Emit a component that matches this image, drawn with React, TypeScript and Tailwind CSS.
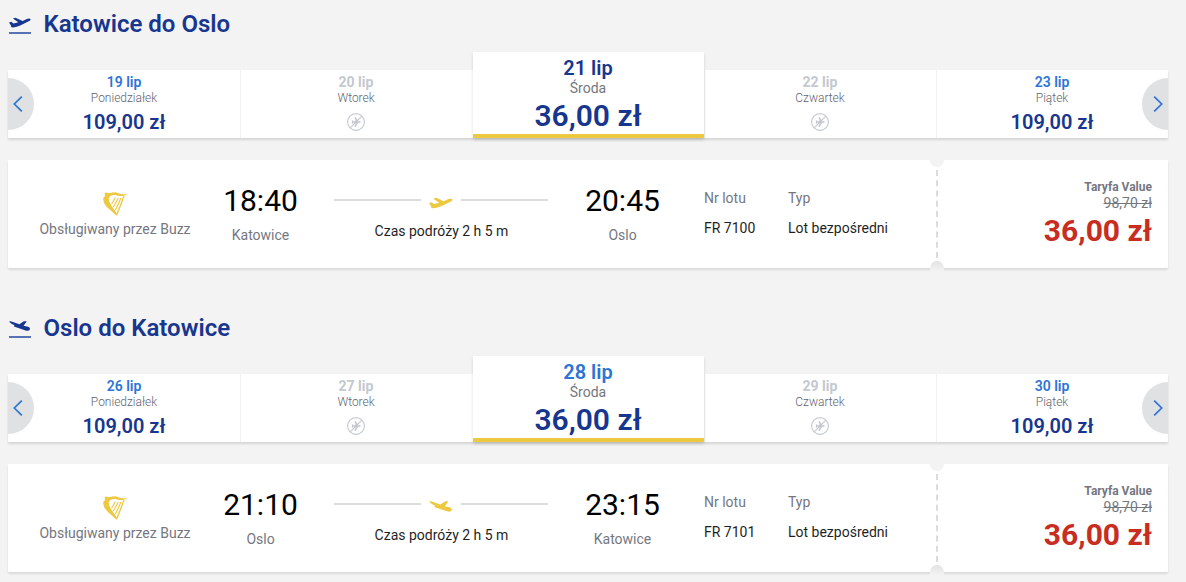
import React from 'react';
import clsx from 'clsx';

type Direction = 'out' | 'back';
type Day = { date: string; weekday: string; price?: string };
type Trip = {
  direction: Direction;
  from: string;
  to: string;
  departs: string;
  arrives: string;
  number: string;
  days: Day[];
};

const trips: Trip[] = [
  {
    direction: 'out',
    from: 'Katowice',
    to: 'Oslo',
    departs: '18:40',
    arrives: '20:45',
    number: 'FR 7100',
    days: [
      { date: '19 lip', weekday: 'Poniedziałek', price: '109,00 zł' },
      { date: '20 lip', weekday: 'Wtorek' },
      { date: '21 lip', weekday: 'Środa', price: '36,00 zł' },
      { date: '22 lip', weekday: 'Czwartek' },
      { date: '23 lip', weekday: 'Piątek', price: '109,00 zł' },
    ],
  },
  {
    direction: 'back',
    from: 'Oslo',
    to: 'Katowice',
    departs: '21:10',
    arrives: '23:15',
    number: 'FR 7101',
    days: [
      { date: '26 lip', weekday: 'Poniedziałek', price: '109,00 zł' },
      { date: '27 lip', weekday: 'Wtorek' },
      { date: '28 lip', weekday: 'Środa', price: '36,00 zł' },
      { date: '29 lip', weekday: 'Czwartek' },
      { date: '30 lip', weekday: 'Piątek', price: '109,00 zł' },
    ],
  },
];

const planePaths: Record<Direction, string> = {
  out: 'M0 17 L7 15 L14 20 L29 16 L12 5 L20 2 L42 12 L55 6 Q66 3 67 8 Q66 12 58 15 L33 27 Q18 33 9 32 Q5 30 6 26 Z',
  back: 'M0 2 Q3 0 10 2 L32 10 L46 1 L55 1 L45 15 L59 18 Q67 21 64 27 Q61 32 51 29 L29 22 L15 17 L17 13 L9 9 Z',
};

function Plane({ direction, className }: { direction: Direction; className?: string }) {
  return (
    <svg viewBox="0 0 68 34" className={className} fill="currentColor" preserveAspectRatio="none">
      <path d={planePaths[direction]} />
    </svg>
  );
}

function Harp() {
  return (
    <svg viewBox="0 0 72 72" className="-ml-px h-6 w-6" fill="none" stroke="#edc841">
      <path
        d="M5 4 Q10 -1 14 4 L25 2 Q35 -2 46 4 Q57 8 73 6 L69 9 L58 12 Q46 13 37 9 Q22 8 18 17 Q15 27 26 42 L41 64 L41 72 Q26 57 14 47 Q-1 33 1 18 L6 12 Z"
        fill="#edc841"
        stroke="none"
      />
      <path d="M63 11 Q54 38 41 68" strokeWidth="4" />
      <path d="M37 17 L26 36 M46 18 L31 45 M54 18 L37 55" strokeWidth="3.4" />
    </svg>
  );
}

function NoFlight() {
  return (
    <svg viewBox="0 0 18 18" className="mt-[7px] h-[18px] w-[18px]" fill="none" stroke="#c4c8cf">
      <circle cx="9" cy="9" r="8.4" strokeWidth="1.1" />
      <path d="M3.2 14.8 L14.8 3.2" strokeWidth="1.1" />
      <path
        d="M5 7 L6.2 8.3 L8.7 8.3 L7.7 4.3 L8.7 4.3 L11 8.3 L13 8.3 Q14.5 9 13 9.7 L11 9.7 L8.7 13.7 L7.7 13.7 L8.7 9.7 L6.2 9.7 L5 11 Z"
        fill="#c4c8cf"
        stroke="#c4c8cf"
        strokeWidth=".3"
      />
    </svg>
  );
}

function Arrow({ next = false }: { next?: boolean }) {
  return (
    <button
      className={clsx(
        'absolute top-[8px] flex h-[52px] w-[26px] items-center bg-[#dfe1e3]',
        next ? 'right-0 rounded-l-full pl-[11px]' : 'left-0 rounded-r-full pl-[5px]',
      )}
      aria-label={next ? 'Następne' : 'Poprzednie'}
    >
      <svg viewBox="0 0 10 16" className="h-4 w-2.5" fill="none" stroke="#2c74d6" strokeWidth="1.7">
        <path d={next ? 'M1.2 .7 L8.7 8 L1.2 15.3' : 'M8.8 .7 L1.3 8 L8.8 15.3'} />
      </svg>
    </button>
  );
}

function DayCell({ day, first }: { day: Day; first: boolean }) {
  return (
    <div
      className={clsx(
        'flex h-full w-[232px] flex-col items-center pt-1',
        !first && 'border-l border-[#f1f1f1] pr-px',
      )}
    >
      <span className={clsx('text-sm leading-4', day.price ? 'font-semibold text-[#2c74d6]' : 'font-bold text-[#c4c8cf]')}>
        {day.date}
      </span>
      <span className="text-xs font-light leading-4 text-[#5f6370]">{day.weekday}</span>
      {day.price ? (
        <span className="mt-1 text-xl font-semibold leading-6 text-[#17368f]">{day.price}</span>
      ) : (
        <NoFlight />
      )}
    </div>
  );
}

function SelectedDay({ day, direction }: { day: Day; direction: Direction }) {
  return (
    <div className="relative z-10 -mt-[18px] ml-px flex h-[86px] w-[231px] flex-col items-center border-b-4 border-[#edc841] bg-white pr-px pt-1 shadow-[0_2px_3px_rgba(0,0,0,0.14)]">
      <span
        className={clsx('text-xl font-semibold leading-6', direction === 'out' ? 'text-[#17368f]' : 'text-[#2c74d6]')}
      >
        {day.date}
      </span>
      <span className="text-sm leading-4 text-[#75777f]">{day.weekday}</span>
      <span className="mt-1 text-[30px] font-semibold leading-8 text-[#17368f]">{day.price}</span>
    </div>
  );
}

function Stop({ time, city }: { time: string; city: string }) {
  return (
    <div className="flex w-[101px] flex-col items-center pt-[23px]">
      <span className="text-[30px] leading-9 text-black">{time}</span>
      <span className="mt-[6px] text-sm leading-5 text-[#75777f]">{city}</span>
    </div>
  );
}

function Detail({ label, value }: { label: string; value: string }) {
  return (
    <div className="flex flex-col gap-[10px] pt-7 text-sm leading-5">
      <span className="text-[#75777f]">{label}</span>
      <span className="text-[#1f1f1f]">{value}</span>
    </div>
  );
}

function FlightCard({ trip }: { trip: Trip }) {
  return (
    <article className="relative mt-[22px] flex h-[108px] w-[1160px] bg-white shadow-[0_2px_2px_rgba(0,0,0,0.1)]">
      <div className="flex w-[929px]">
        <div className="flex w-[214px] flex-col items-center pt-8">
          <Harp />
          <span className="mt-[3px] text-sm leading-5 text-[#75777f]">Obsługiwany przez Buzz</span>
        </div>
        <div className="-ml-3">
          <Stop time={trip.departs} city={trip.from} />
        </div>
        <div className="ml-[23px] flex w-[214px] flex-col items-center pt-8">
          <div className="flex h-4 w-full items-center">
            <i className="h-[2px] w-[87px] bg-[#dcdedd]" />
            <Plane direction={trip.direction} className="mx-2 mt-[5px] h-3 w-6 text-[#edc841]" />
            <i className="h-[2px] w-[87px] bg-[#dcdedd]" />
          </div>
          <span className="ml-px mt-[13px] text-sm leading-5 text-[#1f1f1f]">Czas podróży 2 h 5 m</span>
        </div>
        <div className="ml-6">
          <Stop time={trip.arrives} city={trip.to} />
        </div>
        <div className="ml-[31px] w-[84px]">
          <Detail label="Nr lotu" value={trip.number} />
        </div>
        <Detail label="Typ" value="Lot bezpośredni" />
      </div>
      <div className="flex flex-1 flex-col items-end pr-4 pt-[19px] text-[#75777f]">
        <span className="text-xs font-bold leading-4">Taryfa Value</span>
        <span className="text-sm leading-4 line-through">98,70 zł</span>
        <span className="mt-[2px] text-[30px] font-bold leading-9 text-[#c82d22]">36,00 zł</span>
      </div>
      <svg className="absolute left-[928px] top-[10px] h-[90px] w-[2px]" viewBox="0 0 2 90">
        <path d="M1 0 V88" stroke="#dcdcdc" strokeWidth="2" strokeDasharray="6 4.25" />
      </svg>
      <i className="absolute left-[922px] top-0 h-[7px] w-[14px] rounded-b-full bg-[#f3f3f3]" />
      <i className="absolute left-[922px] top-[101px] h-[10px] w-[14px] rounded-t-[7px] bg-linear-to-b from-[#e2e2e2] to-[#f3f3f3]" />
    </article>
  );
}

function TripSection({ trip }: { trip: Trip }) {
  return (
    <section className="h-[304px] pl-2">
      <header className="flex h-[70px] items-start gap-[12.5px] pt-2 text-[#17368f]">
        <div className="ml-px mt-[9px] flex w-[22px] flex-col">
          <Plane direction={trip.direction} className="h-[11px] w-[22px]" />
          <i className="mt-[4px] h-[1.5px] w-full bg-[#5772b4]" />
        </div>
        <h2 className="text-2xl font-semibold leading-8">
          {trip.from} do {trip.to}
        </h2>
      </header>
      <div className="relative flex h-[68px] w-[1160px] bg-white shadow-[0_2px_2px_rgba(0,0,0,0.12)]">
        {trip.days.map((day, i) =>
          i === 2 ? (
            <SelectedDay key={day.date} day={day} direction={trip.direction} />
          ) : (
            <DayCell key={day.date} day={day} first={i === 0} />
          ),
        )}
        <Arrow />
        <Arrow next />
      </div>
      <FlightCard trip={trip} />
    </section>
  );
}

export default function App() {
  return (
    <main className="h-[582px] overflow-hidden bg-[#f3f3f3] font-['Roboto',sans-serif]">
      {trips.map((trip) => (
        <TripSection key={trip.number} trip={trip} />
      ))}
    </main>
  );
}
